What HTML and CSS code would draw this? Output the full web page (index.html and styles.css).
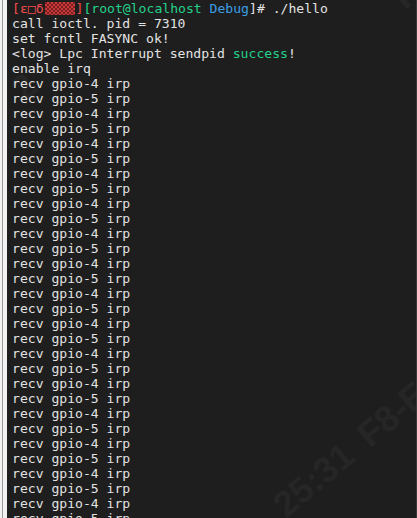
FILE: index.html
```html
<!DOCTYPE html>
<html>
<head>
<meta charset="utf-8">
<link rel="stylesheet" href="styles.css">
</head>
<body>
<div class="frame">
  <div class="rule"></div>
  <div class="term">
    <div class="line"><span class="red">[ε□δ<span class="mosaic"></span>]</span><span class="green">[root@localhost </span><span class="blue">Debug</span>]# ./hello</div>
    <div class="line">call ioctl. pid = 7310</div>
    <div class="line">set fcntl FASYNC ok!</div>
    <div class="line">&lt;log&gt; Lpc Interrupt sendpid <span class="green">success</span>!</div>
    <div class="line">enable irq</div>
    <div class="line">recv gpio-4 irp</div>
    <div class="line">recv gpio-5 irp</div>
    <div class="line">recv gpio-4 irp</div>
    <div class="line">recv gpio-5 irp</div>
    <div class="line">recv gpio-4 irp</div>
    <div class="line">recv gpio-5 irp</div>
    <div class="line">recv gpio-4 irp</div>
    <div class="line">recv gpio-5 irp</div>
    <div class="line">recv gpio-4 irp</div>
    <div class="line">recv gpio-5 irp</div>
    <div class="line">recv gpio-4 irp</div>
    <div class="line">recv gpio-5 irp</div>
    <div class="line">recv gpio-4 irp</div>
    <div class="line">recv gpio-5 irp</div>
    <div class="line">recv gpio-4 irp</div>
    <div class="line">recv gpio-5 irp</div>
    <div class="line">recv gpio-4 irp</div>
    <div class="line">recv gpio-5 irp</div>
    <div class="line">recv gpio-4 irp</div>
    <div class="line">recv gpio-5 irp</div>
    <div class="line">recv gpio-4 irp</div>
    <div class="line">recv gpio-5 irp</div>
    <div class="line">recv gpio-4 irp</div>
    <div class="line">recv gpio-5 irp</div>
    <div class="line">recv gpio-4 irp</div>
    <div class="line">recv gpio-5 irp</div>
    <div class="line">recv gpio-4 irp</div>
    <div class="line">recv gpio-5 irp</div>
    <div class="line">recv gpio-4 irp</div>
    <div class="line">recv gpio-5 irp</div>
    <div class="wm wm-a">25:31</div>
    <div class="wm wm-b">F8-E4</div>
    <div class="wm wm-c">F8-E</div>
    <div class="wm wm-d">2</div>
  </div>
</div>
</body>
</html>
```

FILE: styles.css
```css
html, body {
  margin: 0;
  padding: 0;
  width: 417px;
  height: 518px;
  overflow: hidden;
  background: #f3f3f3;
}
.frame {
  display: flex;
  height: 518px;
  padding-left: 2px;
  box-sizing: border-box;
}
.rule {
  width: 1px;
  background: #9a9a9a;
  margin-right: 4px;
}
.term {
  position: relative;
  flex: 1;
  background: #1e1e1e;
  border-right: 1px solid #3a3a3a;
  padding: 1px 0 0 5px;
  overflow: hidden;
  font-family: "DejaVu Sans Mono", "Liberation Mono", monospace;
  font-size: 13.1px;
  line-height: 15px;
  color: #e3e3e3;
}
.line {
  white-space: pre;
  height: 15px;
  position: relative;
  z-index: 1;
}
.red { color: #f14c4c; }
.green { color: #23d18b; }
.blue { color: #3b9ee6; }
.mosaic {
  display: inline-block;
  width: 30px;
  height: 13px;
  margin: 0 1px;
  vertical-align: -2px;
  background-color: #7a2020;
  background-image:
    linear-gradient(45deg, #c83a3a 25%, transparent 25%, transparent 75%, #c83a3a 75%),
    linear-gradient(45deg, #c83a3a 25%, transparent 25%, transparent 75%, #c83a3a 75%);
  background-size: 4px 4px;
  background-position: 0 0, 2px 2px;
}
.wm {
  position: absolute;
  font-family: "Liberation Sans", Arial, sans-serif;
  font-weight: bold;
  font-size: 36px;
  color: #262626;
  transform: rotate(-40deg);
  transform-origin: left bottom;
  white-space: nowrap;
  z-index: 0;
}
.wm-a { left: 276px; top: 500px; }
.wm-b { left: 360px; top: 430px; }
.wm-c { left: 395px; top: -8px; }
.wm-d { left: 14px; top: 84px; }
```
